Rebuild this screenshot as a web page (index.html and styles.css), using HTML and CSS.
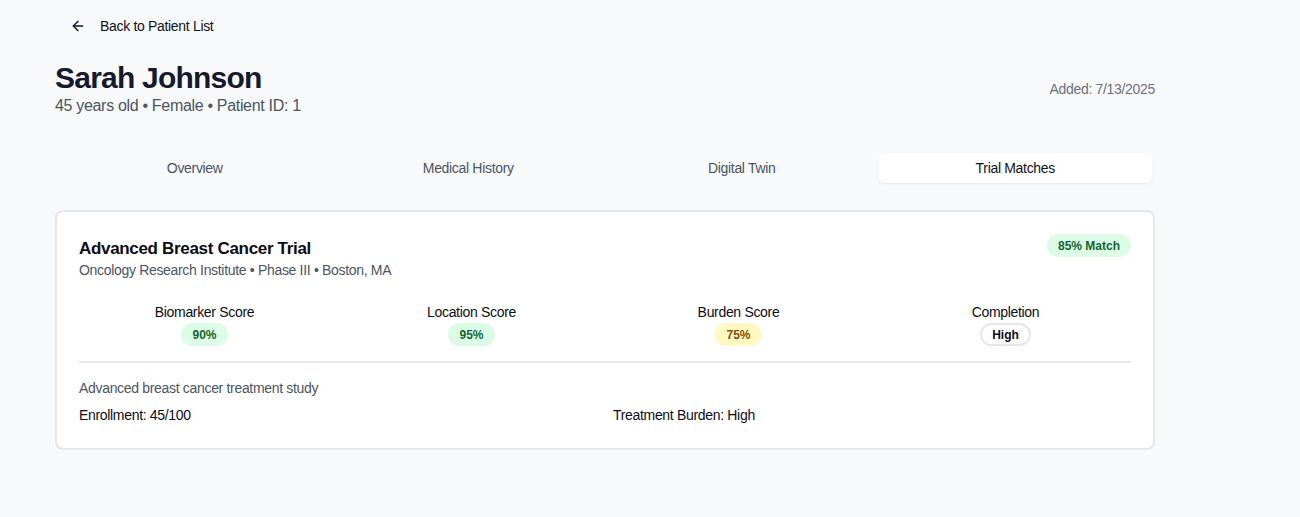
FILE: index.html
```html
<!DOCTYPE html>
<html lang="en">
<head>
<meta charset="utf-8">
<title>Sarah Johnson</title>
<link rel="stylesheet" href="styles.css">
</head>
<body>
<div class="page">
  <button class="back">
    <svg class="back-icon" width="16" height="16" viewBox="0 0 24 24" fill="none" stroke="currentColor" stroke-width="2" stroke-linecap="round" stroke-linejoin="round"><path d="m12 19-7-7 7-7"/><path d="M19 12H5"/></svg>
    <span>Back to Patient List</span>
  </button>

  <header class="head">
    <div>
      <h1 class="name">Sarah Johnson</h1>
      <p class="meta">45 years old • Female • Patient ID: 1</p>
    </div>
    <div class="added">Added: 7/13/2025</div>
  </header>

  <nav class="tabs">
    <div class="tab">Overview</div>
    <div class="tab">Medical History</div>
    <div class="tab">Digital Twin</div>
    <div class="tab active">Trial Matches</div>
  </nav>

  <section class="card">
    <div class="card-top">
      <div>
        <h2 class="trial">Advanced Breast Cancer Trial</h2>
        <p class="org">Oncology Research Institute • Phase III • Boston, MA</p>
      </div>
      <span class="pill green">85% Match</span>
    </div>

    <div class="scores">
      <div class="score"><div class="label">Biomarker Score</div><span class="pill green">90%</span></div>
      <div class="score"><div class="label">Location Score</div><span class="pill green">95%</span></div>
      <div class="score"><div class="label">Burden Score</div><span class="pill yellow">75%</span></div>
      <div class="score"><div class="label">Completion</div><span class="pill outline">High</span></div>
    </div>

    <div class="details">
      <p class="desc">Advanced breast cancer treatment study</p>
      <div class="facts">
        <div>Enrollment: 45/100</div>
        <div>Treatment Burden: High</div>
      </div>
    </div>
  </section>
</div>
</body>
</html>
```

FILE: styles.css
```css
* { box-sizing: border-box; }
html, body { margin: 0; padding: 0; }
body {
  background: #f8f9fb;
  font-family: "Liberation Sans", Arial, sans-serif;
  color: #0f1222;
  letter-spacing: -0.02em;
}
.page {
  width: 1100px;
  margin-left: 55px;
  padding-top: 8px;
}
.back {
  display: inline-flex;
  align-items: center;
  gap: 14px;
  height: 36px;
  padding: 0 16px 0 15px;
  border: 0;
  background: transparent;
  font-family: inherit;
  letter-spacing: inherit;
  font-size: 14px;
  color: #0f1222;
  margin-left: 0;
}
.back-icon { display: block; }
.head {
  display: flex;
  justify-content: space-between;
  align-items: flex-start;
  margin-top: 16px;
}
.name {
  margin: 0;
  font-size: 30px;
  line-height: 36px;
  font-weight: 700;
  color: #151a2c;
  letter-spacing: -0.026em;
}
.meta {
  margin: -2px 0 0;
  font-size: 16px;
  line-height: 24px;
  color: #4b5563;
}
.added {
  margin-top: 19px;
  font-size: 14px;
  line-height: 20px;
  color: #6b7280;
}
.tabs {
  display: grid;
  grid-template-columns: repeat(4, 1fr);
  padding: 3px;
  margin-top: 32px;
  height: 36px;
}
.tab {
  display: flex;
  align-items: center;
  justify-content: center;
  font-size: 14px;
  color: #4b5563;
  border-radius: 6px;
}
.tab.active {
  background: #fff;
  color: #0f1222;
  box-shadow: 0 1px 2px rgba(0,0,0,0.06);
}
.card {
  margin-top: 24px;
  background: #fff;
  border: 2px solid #e5e7eb;
  border-radius: 8px;
  padding: 22px 22px 23px;
}
.card-top {
  display: flex;
  justify-content: space-between;
  align-items: flex-start;
}
.trial {
  margin: 3px 0 0;
  font-size: 17px;
  line-height: 24px;
  font-weight: 700;
  color: #0b0d17;
}
.org {
  margin: -1px 0 0;
  font-size: 14px;
  line-height: 20px;
  color: #4b5563;
}
.pill {
  display: inline-flex;
  align-items: center;
  justify-content: center;
  height: 23px;
  padding: 0 11px;
  border-radius: 999px;
  font-size: 12px;
  font-weight: 700;
  letter-spacing: 0;
}
.pill.green { background: #dcfce7; color: #166534; }
.pill.yellow { background: #fef9c3; color: #854d0e; }
.pill.outline { background: #fff; border: 2px solid #e5e7eb; color: #0b0d17; padding: 0 10px; }
.scores {
  display: grid;
  grid-template-columns: repeat(4, 1fr);
  gap: 16px;
  margin-top: 22px;
  padding-bottom: 15px;
  border-bottom: 2px solid #e5e7eb;
}
.score {
  display: flex;
  flex-direction: column;
  align-items: center;
  gap: 1px;
}
.label {
  font-size: 14px;
  line-height: 20px;
  color: #0b0d17;
}
.details { padding-top: 15px; }
.desc {
  margin: 0;
  font-size: 14px;
  line-height: 20px;
  color: #4b5563;
}
.facts {
  display: grid;
  grid-template-columns: 1fr 1fr;
  gap: 16px;
  margin-top: 7px;
  font-size: 14px;
  line-height: 20px;
  color: #0b0d17;
}
```
